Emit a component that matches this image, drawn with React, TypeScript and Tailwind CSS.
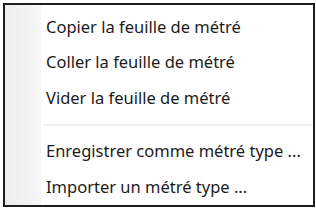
import React from "react";

const Item = ({ label }: { label: string }) => (
  <div className="h-[36px] flex items-center pl-[5px] text-[16.5px] text-[#1b1b1b] leading-none">
    {label}
  </div>
);

export default function App() {
  return (
    <div className="w-[316px] h-[210px] bg-white pl-[3px] pt-[3px]" style={{ fontFamily: '"Noto Sans", "Open Sans", sans-serif' }}>
      <div className="w-[312px] h-[204px] border-2 border-[#1e1e1e] flex bg-white">
        <div className="w-[36px] h-full bg-gradient-to-r from-[#ededed] to-[#f6f6f6]" />
        <div className="flex-1 flex flex-col pt-[4px]">
          <Item label="Copier la feuille de métré" />
          <Item label="Coller la feuille de métré" />
          <Item label="Vider la feuille de métré" />
          <div className="h-[18px] flex items-center pl-[3px]">
            <div className="h-[2px] w-full bg-[#f2f2f2]" />
          </div>
          <Item label="Enregistrer comme métré type ..." />
          <Item label="Importer un métré type ..." />
        </div>
      </div>
    </div>
  );
}
